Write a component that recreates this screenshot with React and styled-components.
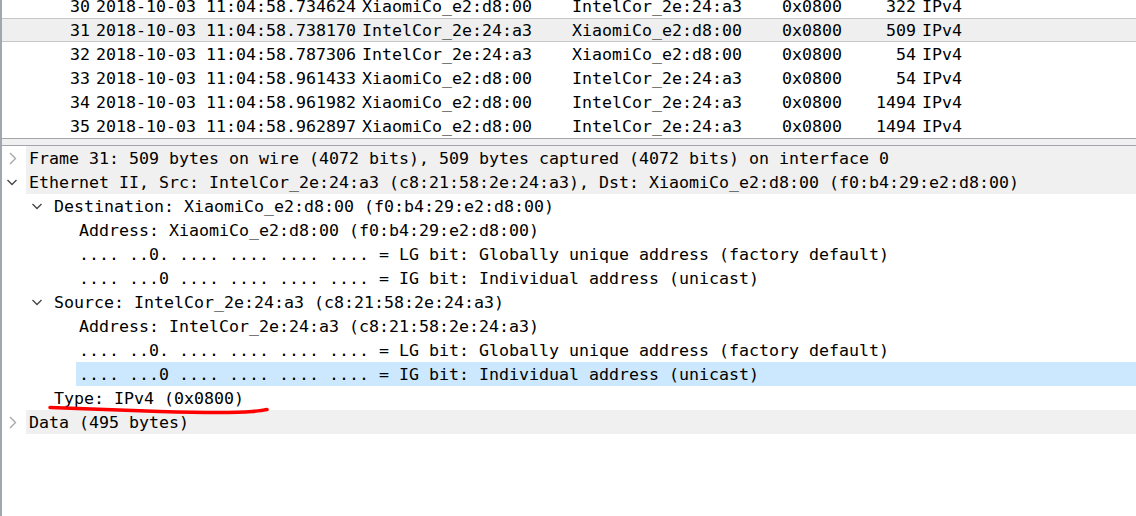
import React from "react";
import styled, { createGlobalStyle } from "styled-components";

const GlobalStyle = createGlobalStyle`
  html, body {
    margin: 0;
    padding: 0;
    background: #ffffff;
  }
  body {
    font-family: "DejaVu Sans Mono", "Liberation Mono", monospace;
    font-size: 16.61px;
    color: #000000;
  }
`;

const packets = [
  { no: 30, time: "2018-10-03 11:04:58.734624", src: "XiaomiCo_e2:d8:00", dst: "IntelCor_2e:24:a3", type: "0x0800", len: 322, proto: "IPv4" },
  { no: 31, time: "2018-10-03 11:04:58.738170", src: "IntelCor_2e:24:a3", dst: "XiaomiCo_e2:d8:00", type: "0x0800", len: 509, proto: "IPv4", selected: true },
  { no: 32, time: "2018-10-03 11:04:58.787306", src: "IntelCor_2e:24:a3", dst: "XiaomiCo_e2:d8:00", type: "0x0800", len: 54, proto: "IPv4" },
  { no: 33, time: "2018-10-03 11:04:58.961433", src: "XiaomiCo_e2:d8:00", dst: "IntelCor_2e:24:a3", type: "0x0800", len: 54, proto: "IPv4" },
  { no: 34, time: "2018-10-03 11:04:58.961982", src: "XiaomiCo_e2:d8:00", dst: "IntelCor_2e:24:a3", type: "0x0800", len: 1494, proto: "IPv4" },
  { no: 35, time: "2018-10-03 11:04:58.962897", src: "XiaomiCo_e2:d8:00", dst: "IntelCor_2e:24:a3", type: "0x0800", len: 1494, proto: "IPv4" },
];

const details = [
  { level: 0, state: "closed", top: true, text: "Frame 31: 509 bytes on wire (4072 bits), 509 bytes captured (4072 bits) on interface 0" },
  { level: 0, state: "open", top: true, text: "Ethernet II, Src: IntelCor_2e:24:a3 (c8:21:58:2e:24:a3), Dst: XiaomiCo_e2:d8:00 (f0:b4:29:e2:d8:00)" },
  { level: 1, state: "open", text: "Destination: XiaomiCo_e2:d8:00 (f0:b4:29:e2:d8:00)" },
  { level: 2, text: "Address: XiaomiCo_e2:d8:00 (f0:b4:29:e2:d8:00)" },
  { level: 2, text: ".... ..0. .... .... .... .... = LG bit: Globally unique address (factory default)" },
  { level: 2, text: ".... ...0 .... .... .... .... = IG bit: Individual address (unicast)" },
  { level: 1, state: "open", text: "Source: IntelCor_2e:24:a3 (c8:21:58:2e:24:a3)" },
  { level: 2, text: "Address: IntelCor_2e:24:a3 (c8:21:58:2e:24:a3)" },
  { level: 2, text: ".... ..0. .... .... .... .... = LG bit: Globally unique address (factory default)" },
  { level: 2, selected: true, text: ".... ...0 .... .... .... .... = IG bit: Individual address (unicast)" },
  { level: 1, text: "Type: IPv4 (0x0800)" },
  { level: 0, state: "closed", top: true, text: "Data (495 bytes)" },
];

const Window = styled.div`
  position: relative;
  width: 1136px;
  height: 516px;
  box-sizing: border-box;
  border-left: 2px solid #a2a6ad;
  overflow: hidden;
  white-space: pre;
`;

const PacketList = styled.div`
  height: 138px;
  overflow: hidden;
`;

const PacketScroll = styled.div`
  margin-top: -6px;
`;

const PacketRow = styled.div`
  display: grid;
  grid-template-columns: 91px 266px 210px 210px 80px 60px 1fr;
  height: 24px;
  box-sizing: border-box;
  padding-top: 2px;
  background: ${(p) => (p.$selected ? "#efefef" : "transparent")};
  border-top: 1px solid ${(p) => (p.$selected ? "#c6c6c6" : "transparent")};
  border-bottom: 1px solid ${(p) => (p.$selected ? "#c6c6c6" : "transparent")};
  line-height: 20px;
`;

const Cell = styled.div`
  padding: ${(p) => (p.$right ? "0 3px 0 0" : "0 0 0 3px")};
  text-align: ${(p) => (p.$right ? "right" : "left")};
  overflow: hidden;
`;

const Splitter = styled.div`
  height: 6px;
  background: #f0f0f0;
  border-top: 1px solid #a3a5ab;
  border-bottom: 1px solid #a3a5ab;
`;

const Tree = styled.div`
  display: flex;
  flex-direction: column;
`;

const TreeRow = styled.div`
  display: flex;
  height: 24px;
  padding-left: ${(p) => p.$level * 25}px;
`;

const Toggle = styled.div`
  flex: 0 0 24px;
  height: 24px;
  display: flex;
`;

const Label = styled.div`
  flex: 1;
  height: 24px;
  box-sizing: border-box;
  padding: 2px 0 0 3px;
  line-height: 22px;
  background: ${(p) => (p.$selected ? "#cce8ff" : p.$top ? "#f0f0f0" : "transparent")};
`;

const Annotation = styled.svg`
  position: absolute;
  left: 43px;
  top: 401px;
  pointer-events: none;
`;

const Chevron = ({ state }) => {
  if (!state) return null;
  return (
    <svg width="24" height="24" viewBox="0 0 24 24">
      {state === "closed" ? (
        <path d="M8 7 L13.5 12.5 L8 18" fill="none" stroke="#a8a8a8" strokeWidth="1.4" />
      ) : (
        <path d="M5.5 10 L10 14.5 L14.5 10" fill="none" stroke="#484848" strokeWidth="1.4" />
      )}
    </svg>
  );
};

export default function App() {
  return (
    <>
      <GlobalStyle />
      <Window>
        <PacketList>
          <PacketScroll>
            {packets.map((p) => (
              <PacketRow key={p.no} $selected={p.selected}>
                <Cell $right>{p.no}</Cell>
                <Cell>{p.time}</Cell>
                <Cell>{p.src}</Cell>
                <Cell>{p.dst}</Cell>
                <Cell>{p.type}</Cell>
                <Cell $right>{p.len}</Cell>
                <Cell>{p.proto}</Cell>
              </PacketRow>
            ))}
          </PacketScroll>
        </PacketList>
        <Splitter />
        <Tree>
          {details.map((d, i) => (
            <TreeRow key={i} $level={d.level}>
              <Toggle>
                <Chevron state={d.state} />
              </Toggle>
              <Label $top={d.top} $selected={d.selected}>
                {d.text}
              </Label>
            </TreeRow>
          ))}
        </Tree>
        <Annotation width="232" height="20" viewBox="45 403 232 20">
          <path
            d="M50 409.5 C 80 410.5, 110 412, 160 413.5 S 235 415, 252 413.5 S 262 412, 267 411.5"
            fill="none"
            stroke="#ff0000"
            strokeWidth="3.5"
            strokeLinecap="round"
          />
        </Annotation>
      </Window>
    </>
  );
}
